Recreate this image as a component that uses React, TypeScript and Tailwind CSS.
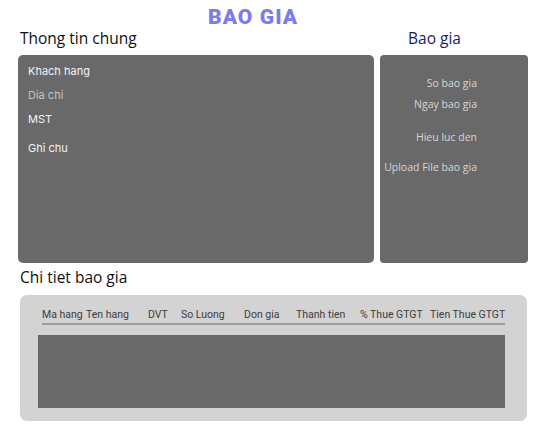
const columns = [
  { label: "Ma hang", w: "w-[44px]" },
  { label: "Ten hang", w: "w-[62px]" },
  { label: "DVT", w: "w-[33px]" },
  { label: "So Luong", w: "w-[63px]" },
  { label: "Don gia", w: "w-[52px]" },
  { label: "Thanh tien", w: "w-[64px]" },
  { label: "% Thue GTGT", w: "w-[70px]" },
  { label: "Tien Thue GTGT", w: "w-[75px]" },
];

function App() {
  return (
    <div className="w-[543px] h-[442px] bg-white overflow-hidden font-['Open_Sans',sans-serif]">
      <div className="pt-[5px] h-[27px] pl-[208px]">
        <h1 className="font-['Roboto',sans-serif] font-black text-[21px] leading-[24px] tracking-[1.1px] text-[#7b7bf4]">
          BAO GIA
        </h1>
      </div>

      <div className="flex h-[22px] text-[15.5px] leading-[22px]">
        <h2 className="ml-[20px] w-[388px] text-[#111]">Thong tin chung</h2>
        <h2 className="text-[#1a1a66]">Bao gia</h2>
      </div>

      <div className="flex gap-[6px] mt-[6px] ml-[18px] h-[208px]">
        <div className="w-[356px] bg-[#696969] rounded-[5px] pt-[8px] pl-[10px] font-['Inter',sans-serif] text-[11px] leading-[16px]">
          <p className="text-[#f2f2f2]">Khach hang</p>
          <p className="mt-[8px] text-[#c4c4c4]">Dia chi</p>
          <p className="mt-[8px] text-[#f2f2f2]">MST</p>
          <p className="mt-[13px] text-[#f2f2f2]">Ghi chu</p>
        </div>
        <div className="w-[148px] bg-[#696969] rounded-[4px] pt-[21px] text-[10.5px] leading-[14px] text-[#d6d6d6]">
          <div className="w-[97px] text-right">
            <p>So bao gia</p>
            <p className="mt-[7px]">Ngay bao gia</p>
            <p className="mt-[19px]">Hieu luc den</p>
            <p className="mt-[16px] whitespace-nowrap">Upload File bao gia</p>
          </div>
        </div>
      </div>

      <h2 className="mt-[3px] ml-[20px] h-[22px] text-[15.5px] leading-[22px] text-[#111]">
        Chi tiet bao gia
      </h2>

      <div className="mt-[7px] ml-[20px] w-[507px] h-[126px] bg-[#d3d3d3] rounded-[7px] pt-[13px] pl-[18px]">
        <div className="ml-[4px] w-[463px] flex border-b-2 border-[#9c9c9c] pb-[1px] font-['Roboto',sans-serif] text-[10.5px] leading-[14px] text-[#3d3d3d]">
          {columns.map((c) => (
            <span key={c.label} className={`${c.w} whitespace-nowrap`}>
              {c.label}
            </span>
          ))}
        </div>
        <div className="mt-[10px] w-[467px] h-[73px] bg-[#696969]" />
      </div>
    </div>
  );
}

export default App;
